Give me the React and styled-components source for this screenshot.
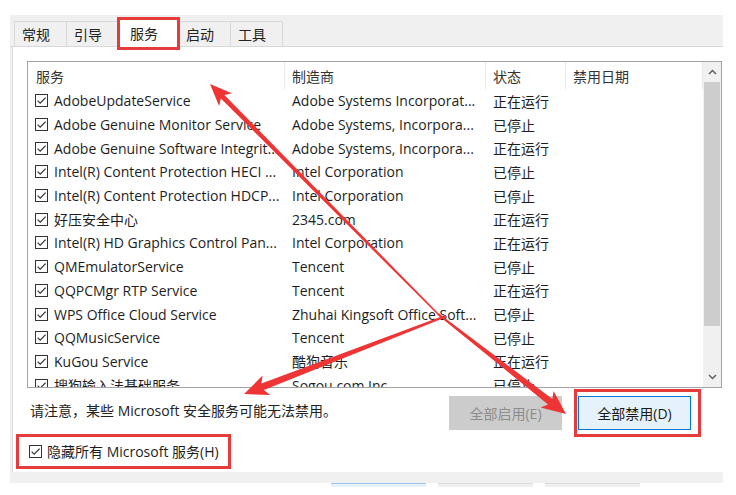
import styled, { createGlobalStyle, css } from 'styled-components';

const GlobalStyle = createGlobalStyle`
  body {
    margin: 0;
    background: #fff;
    font-family: "Open Sans", "Noto Sans CJK SC", sans-serif;
    font-size: 14px;
    color: #1e1e1e;
  }
`

const RED = '#e63b3b'

const Page = styled.div`
  position: relative;
  width: 736px;
  height: 495px;
  overflow: hidden;
  box-sizing: border-box;
  padding: 15px 13px 0 10px;
`

const Dialog = styled.div`
  width: 713px;
  background: #f0f0f0;
  display: flex;
  flex-direction: column;
  padding-bottom: 11px;
`

const TabStrip = styled.div`
  display: flex;
  align-items: flex-end;
  height: 32px;
  padding-left: 5px;
  box-sizing: border-box;
  border-bottom: 1px solid #d9d9d9;
`

const Tab = styled.div`
  position: relative;
  height: 25px;
  box-sizing: border-box;
  display: flex;
  align-items: center;
  padding: 0 16px 0 7px;
  margin-left: -1px;
  border: 1px solid #d9d9d9;
  border-bottom: none;
  background: #f0f0f0;
  color: #222;

  ${p => p.$active && css`
    height: 30px;
    margin: 0 -1px 0 -2px;
    padding: 0 21px 0 12px;
    background: #fff;
  `}
`

// red annotation frame drawn around a part of the dialog
const Mark = styled.div`
  position: relative;

  &::after {
    content: '';
    position: absolute;
    top: ${p => p.$t}px;
    right: ${p => p.$r}px;
    bottom: ${p => p.$b}px;
    left: ${p => p.$l}px;
    border: 3px solid ${RED};
    pointer-events: none;
    z-index: 3;
  }
`

const TabMark = styled(Mark)`
  z-index: 1;
  margin-bottom: -1px;
`

const HideMark = styled(Mark)`
  align-self: flex-start;
  margin-top: 11px;
`

const Panel = styled.div`
  height: 425px;
  box-sizing: border-box;
  margin-left: 2px;
  background: #fff;
  border-left: 1px solid #d9d9d9;
  padding: 14px 0 0 14px;
  display: flex;
  flex-direction: column;
`

const ListBox = styled.div`
  width: 695px;
  height: 327px;
  box-sizing: border-box;
  border: 1px solid #a3a3a3;
  display: flex;
  background: #fff;
`

const Table = styled.div`
  flex: 1;
  display: flex;
  flex-direction: column;
  overflow: hidden;
`

const cols = css`
  display: grid;
  grid-template-columns: 257px 201px 80px 1fr;
`

const HeaderRow = styled.div`
  ${cols}
  height: 27px;
  flex-shrink: 0;
`

const HeaderCell = styled.div`
  display: flex;
  align-items: center;
  padding-left: ${p => (p.$first ? 8 : 7)}px;
  border-right: 1px solid #e8e8e8;
  color: #333;
`

const Row = styled.div`
  ${cols}
  height: 23.7px;
  flex-shrink: 0;
`

const Cell = styled.div`
  display: flex;
  align-items: center;
  gap: 6px;
  padding-left: 7px;
  white-space: nowrap;
  overflow: hidden;
`

const Scrollbar = styled.div`
  width: 18px;
  background: #f0f0f0;
  display: flex;
  flex-direction: column;
`

const ScrollBtn = styled.div`
  height: 20px;
  display: flex;
  align-items: center;
  justify-content: center;
`

const Thumb = styled.div`
  height: 244px;
  margin: 0 1px;
  background: #cdcdcd;
`

const Track = styled.div`
  flex: 1;
`

const BottomRow = styled.div`
  display: flex;
  align-items: flex-start;
  margin-top: 8px;
  padding-right: 32px;
`

const Note = styled.div`
  padding: 4px 0 0 3px;
  color: #222;
`

const Buttons = styled.div`
  margin-left: auto;
  display: flex;
  gap: 16px;
`

const Button = styled.div`
  width: 113px;
  height: 34px;
  box-sizing: border-box;
  display: flex;
  align-items: center;
  justify-content: center;
  border: 1px solid ${p => (p.$primary ? '#0078d7' : '#cccccc')};
  background: ${p => (p.$primary ? '#e5f1fb' : '#cccccc')};
  color: ${p => (p.$primary ? '#1a1a1a' : '#8c8c8c')};
`

const HideRow = styled.div`
  display: flex;
  align-items: center;
  gap: 5px;
  padding-left: 2px;
  height: 20px;
`

const Footer = styled.div`
  display: flex;
  justify-content: flex-end;
  gap: 12px;
  padding-right: 83px;
`

const Stub = styled.div`
  width: 95px;
  height: 3px;
  border-top: 1px solid ${p => (p.$blue ? '#9cc8ee' : '#dcdcdc')};
  background: ${p => (p.$blue ? '#e5f1fb' : '#efefef')};
`

const Overlay = styled.svg`
  position: absolute;
  top: 0;
  left: 0;
  pointer-events: none;
  z-index: 5;
`

const CheckBox = () => (
  <svg width="13" height="13" viewBox="0 0 13 13" style={{ flexShrink: 0 }}>
    <rect x="0.5" y="0.5" width="12" height="12" fill="#fff" stroke="#333" />
    <path d="M2.6 6.6 L5.2 9.2 L10.6 3.6" fill="none" stroke="#333" strokeWidth="1.2" />
  </svg>
)

const Chevron = ({ down }) => (
  <svg width="9" height="6" viewBox="0 0 9 6">
    <path d={down ? 'M1 1 L4.5 4.5 L8 1' : 'M1 5 L4.5 1.5 L8 5'} fill="none" stroke="#606060" strokeWidth="1.5" />
  </svg>
)

// tapered arrow: thin at the start, thick near the head
const arrowPoints = (sx, sy, tx, ty, w0, w1, headLen, headW) => {
  const dx = tx - sx
  const dy = ty - sy
  const len = Math.hypot(dx, dy)
  const ux = dx / len
  const uy = dy / len
  const nx = -uy
  const ny = ux
  const bx = tx - ux * headLen
  const by = ty - uy * headLen
  const nb = bx + ux * 4
  const nby = by + uy * 4
  return [
    [sx + nx * w0 / 2, sy + ny * w0 / 2],
    [nb + nx * w1 / 2, nby + ny * w1 / 2],
    [bx + nx * headW / 2, by + ny * headW / 2],
    [tx, ty],
    [bx - nx * headW / 2, by - ny * headW / 2],
    [nb - nx * w1 / 2, nby - ny * w1 / 2],
    [sx - nx * w0 / 2, sy - ny * w0 / 2],
  ].map(p => p.map(v => v.toFixed(1)).join(',')).join(' ')
}

const arrows = [
  [442, 318, 210, 84, 1.5, 5, 22, 18],
  [446, 316, 244, 394, 2, 7, 24, 21],
  [438, 314, 566, 414, 2, 7, 24, 21],
]

const tabs = ['常规', '引导', '服务', '启动', '工具']

const services = [
  ['AdobeUpdateService', 'Adobe Systems Incorporat...', '正在运行'],
  ['Adobe Genuine Monitor Service', 'Adobe Systems, Incorpora...', '已停止'],
  ['Adobe Genuine Software Integrit...', 'Adobe Systems, Incorpora...', '正在运行'],
  ['Intel(R) Content Protection HECI ...', 'Intel Corporation', '已停止'],
  ['Intel(R) Content Protection HDCP...', 'Intel Corporation', '已停止'],
  ['好压安全中心', '2345.com', '正在运行'],
  ['Intel(R) HD Graphics Control Pan...', 'Intel Corporation', '正在运行'],
  ['QMEmulatorService', 'Tencent', '已停止'],
  ['QQPCMgr RTP Service', 'Tencent', '正在运行'],
  ['WPS Office Cloud Service', 'Zhuhai Kingsoft Office Soft...', '已停止'],
  ['QQMusicService', 'Tencent', '已停止'],
  ['KuGou Service', '酷狗音乐', '正在运行'],
  ['搜狗输入法基础服务', 'Sogou.com Inc', '已停止'],
]

const App = () => {
  return (
    <Page>
      <GlobalStyle />
      <Dialog>
        <TabStrip>
          {tabs.map(t => (
            t === '服务'
              ? <TabMark key={t} $t={0} $r={-1} $b={-3} $l={-2}>
                  <Tab $active>{t}</Tab>
                </TabMark>
              : <Tab key={t}>{t}</Tab>
          ))}
        </TabStrip>
        <Panel>
          <ListBox>
            <Table>
              <HeaderRow>
                <HeaderCell $first>服务</HeaderCell>
                <HeaderCell>制造商</HeaderCell>
                <HeaderCell>状态</HeaderCell>
                <HeaderCell>禁用日期</HeaderCell>
              </HeaderRow>
              {services.map(([name, maker, status]) => (
                <Row key={name}>
                  <Cell><CheckBox />{name}</Cell>
                  <Cell>{maker}</Cell>
                  <Cell>{status}</Cell>
                  <Cell />
                </Row>
              ))}
            </Table>
            <Scrollbar>
              <ScrollBtn><Chevron /></ScrollBtn>
              <Thumb />
              <Track />
              <ScrollBtn><Chevron down /></ScrollBtn>
            </Scrollbar>
          </ListBox>
          <BottomRow>
            <Note>请注意，某些 Microsoft 安全服务可能无法禁用。</Note>
            <Buttons>
              <Button>全部启用(E)</Button>
              <Mark $t={-7} $r={-10} $b={-7} $l={-4}>
                <Button $primary>全部禁用(D)</Button>
              </Mark>
            </Buttons>
          </BottomRow>
          <HideMark $t={-7} $r={-12} $b={-8} $l={-11}>
            <HideRow>
              <CheckBox />
              隐藏所有 Microsoft 服务(H)
            </HideRow>
          </HideMark>
        </Panel>
      </Dialog>
      <Footer>
        <Stub $blue />
        <Stub />
        <Stub />
      </Footer>
      <Overlay width="736" height="495">
        {arrows.map((a, i) => (
          <polygon key={i} points={arrowPoints(...a)} fill="#ee3434" />
        ))}
      </Overlay>
    </Page>
  )
}

export default App
